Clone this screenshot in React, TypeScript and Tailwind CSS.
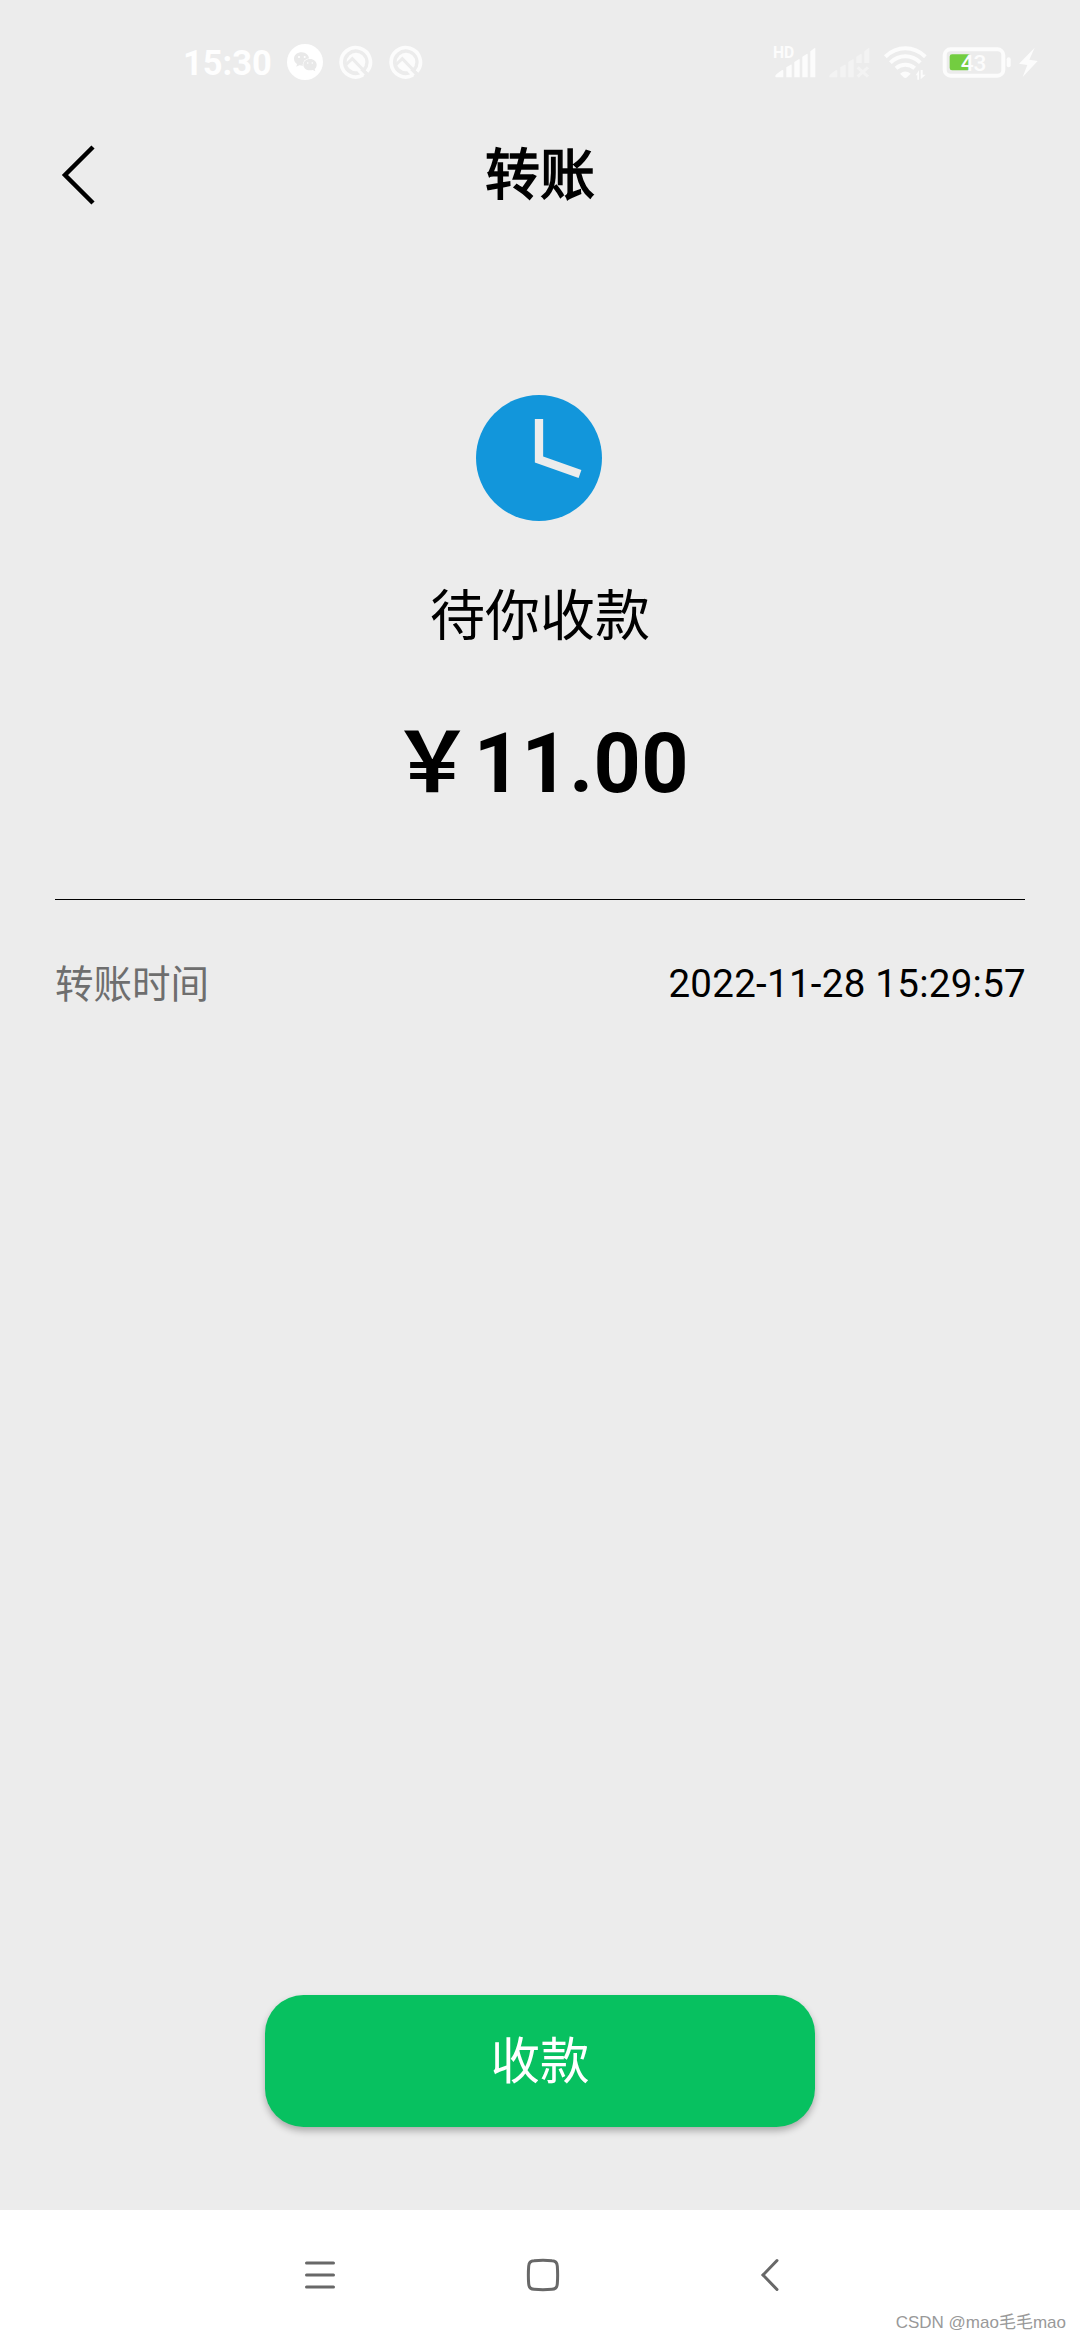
import React from 'react';

const WechatIcon = () => (
  <svg viewBox="0 0 108 108" className="size-9">
    <circle cx="54" cy="54" r="54" fill="#ffffff" />
    <path
      d="M44 25c-13 0-23 8-23 19 0 6 3 12 9 16l-2 8 9-4c4 1 7 1 9 1 12 0 20-9 20-20S57 25 44 25z"
      fill="#e9e9e9"
    />
    <ellipse cx="69" cy="62" rx="22" ry="19" fill="#ffffff" />
    <path
      d="M69 45c-12 0-20 8-20 17s8 17 20 17c3 0 5 0 8-1l8 4-2-7c4-3 6-8 6-13 0-9-9-17-20-17z"
      fill="#e9e9e9"
    />
    <circle cx="36" cy="39" r="3" fill="#ffffff" />
    <circle cx="53" cy="39" r="3" fill="#ffffff" />
    <circle cx="62" cy="57" r="2.5" fill="#ffffff" />
    <circle cx="76" cy="57" r="2.5" fill="#ffffff" />
  </svg>
);

const AndroidQIcon = () => (
  <svg viewBox="0 0 102 102" className="size-[34px]" fill="none">
    <path d="M84 80A44 44 0 1 0 72 90" stroke="#fcfcfc" strokeWidth="11" />
    <circle cx="51" cy="51" r="28" fill="#fcfcfc" />
    <path d="M20 60L40 41L88 91" stroke="#ececec" strokeWidth="9" />
    <path d="M58 76L74 92" stroke="#fcfcfc" strokeWidth="9" />
  </svg>
);

const SignalIcon = () => (
  <svg viewBox="0 0 126 96" className="h-8 w-[42px] overflow-visible" fill="#fcfcfc">
    <path d="M4 91Q4 86 8 84L23 73Q28 70 28 75V94H6Q4 94 4 91z" />
    <path d="M37 64L50 56Q53 54 53 58V94H37z" />
    <path d="M61 48L74 40Q77 38 77 42V94H61z" />
    <path d="M85 32L98 24Q101 22 101 26V94H85z" />
    <path d="M109 16L121 7Q124 5 124 9V94H109z" />
    <text x="-3" y="37" fontSize="47" className="font-['Roboto'] font-bold">HD</text>
  </svg>
);

const NoSignalIcon = () => (
  <svg viewBox="0 0 126 96" className="h-8 w-[42px]" fill="#f3f3f3">
    <path d="M4 91Q4 86 8 84L23 73Q28 70 28 75V94H6Q4 94 4 91z" />
    <path d="M37 64L50 56Q53 54 53 58V94H37z" />
    <path d="M61 48L74 40Q77 38 77 42V94H61z" />
    <path d="M85 32L98 24Q101 22 101 26V51H85z" />
    <path d="M109 16L121 7Q124 5 124 9V51H109z" />
    <path d="M89 64L120 92M120 64L89 92" stroke="#f3f3f3" strokeWidth="9" />
  </svg>
);

const WifiIcon = () => (
  <svg viewBox="0 0 129 105" className="h-[35px] w-[43px]" fill="none">
    <path d="M4 32Q31 7 64 7T124 32" stroke="#fcfcfc" strokeWidth="12" />
    <path d="M19 50Q39 31 64 31T109 50" stroke="#fcfcfc" strokeWidth="12" />
    <path d="M36 67Q48 56 64 56T92 67" stroke="#fcfcfc" strokeWidth="12" />
    <path d="M48 83Q64 70 80 83L69 94Q64 98 59 94z" fill="#fcfcfc" />
    <path d="M95 88L105 73V101H100V88zM110 72V100L125 86H116V72z" fill="#fcfcfc" />
  </svg>
);

const BatteryIcon = () => (
  <svg viewBox="0 0 288 96" className="h-8 w-24">
    <rect x="8" y="10" width="176" height="79" rx="18" fill="none" stroke="#fcfcfc" strokeWidth="12" />
    <rect x="23" y="25" width="61" height="48" rx="7" fill="#73cd40" />
    <text x="56" y="76" fontSize="68" fill="#fcfcfc" className="font-['Roboto'] font-medium">43</text>
    <rect x="194" y="34" width="12" height="30" rx="6" fill="#fcfcfc" />
    <path d="M278 5L231 53L256 57L242 93L287 45L262 41z" fill="#fcfcfc" />
  </svg>
);

const StatusBar = () => (
  <div className="flex h-[124px] items-center justify-between pl-[183px] pr-[42px]">
    <div className="flex items-center">
      <span className="w-[104px] pt-0.5 text-[34.5px] leading-none font-bold text-[#fefefe]">15:30</span>
      <WechatIcon />
      <span className="ml-4 flex gap-4">
        <AndroidQIcon />
        <AndroidQIcon />
      </span>
    </div>
    <div className="flex items-center">
      <SignalIcon />
      <span className="ml-3 flex">
        <NoSignalIcon />
      </span>
      <span className="mt-[3px] ml-[14px] flex">
        <WifiIcon />
      </span>
      <span className="ml-[15px] flex">
        <BatteryIcon />
      </span>
    </div>
  </div>
);

const Header = () => (
  <header className="grid h-[102px] grid-cols-3 items-center">
    <button className="pl-[60px]">
      <svg viewBox="0 0 36 62" className="h-[62px] w-9" fill="none" stroke="#000" strokeWidth="4.500">
        <path d="M33 3L5 31L33 59" />
      </svg>
    </button>
    <h1 className="text-center text-[55px] leading-none [-webkit-text-stroke:1.6px_#000]">转账</h1>
  </header>
);

const ClockIcon = () => (
  <svg viewBox="0 0 126 126" className="size-[126px]">
    <circle cx="63" cy="63" r="63" fill="#1296db" />
    <path d="M63 24V64.500L104 79" fill="none" stroke="#ececec" strokeWidth="8.300" />
  </svg>
);

const NavigationBar = () => (
  <footer className="relative flex h-[130px] bg-white pl-[305px]">
    <svg viewBox="0 0 474 34" className="mt-12 h-[34px] w-[474px]" fill="none" stroke="#686868" strokeWidth="3" strokeLinecap="round">
      <path d="M1.500 5H28.500M1.500 17H28.500M1.500 29H28.500" />
      <path d="M229 2.800Q238 1.800 247 2.800Q252 3 252.300 8Q253 17 252.300 26Q252 31 247 31.300Q238 32.200 229 31.300Q224 31 223.700 26Q223 17 223.700 8Q224 3 229 2.800z" />
      <path d="M472 2.500L458 17L472 31.500" />
    </svg>
    <span className="absolute right-[14px] bottom-[5px] text-[17px] leading-6 whitespace-nowrap text-[#999] font-['Liberation_Sans','Noto_Sans_CJK_SC',sans-serif]">
      CSDN @mao毛毛mao
    </span>
  </footer>
);

const App = () => {
  return (
    <div className="flex h-[2340px] w-[1080px] flex-col overflow-hidden bg-[#ececec] text-black font-['Roboto','Noto_Sans_CJK_SC',sans-serif]">
      <StatusBar />
      <Header />

      <main className="flex grow flex-col items-center px-[55px]">
        <div className="mt-[169px] -ml-[2px]">
          <ClockIcon />
        </div>
        <p className="mt-[65px] text-[55px] leading-[60px]">待你收款</p>
        <p className="mt-[68px] text-[82.5px] leading-[100px] font-bold tracking-[0.4px]">￥11.00</p>

        <div className="mt-[85px] w-full border-t border-black pt-[55px]">
          <div className="flex items-center justify-between text-[38.5px] leading-[56px]">
            <span className="pt-0.5 text-[#6e6e6e]">转账时间</span>
            <span className="-mr-px tracking-[0.27px]">2022-11-28 15:29:57</span>
          </div>
        </div>

        <button className="mt-auto mb-[83px] h-[132px] w-[550px] rounded-[38.5px] bg-[#07c160] pt-1 text-[49.5px] leading-none text-white shadow-[0_4px_7px_rgba(0,0,0,0.28)]">
          收款
        </button>
      </main>

      <NavigationBar />
    </div>
  );
};

export default App;
